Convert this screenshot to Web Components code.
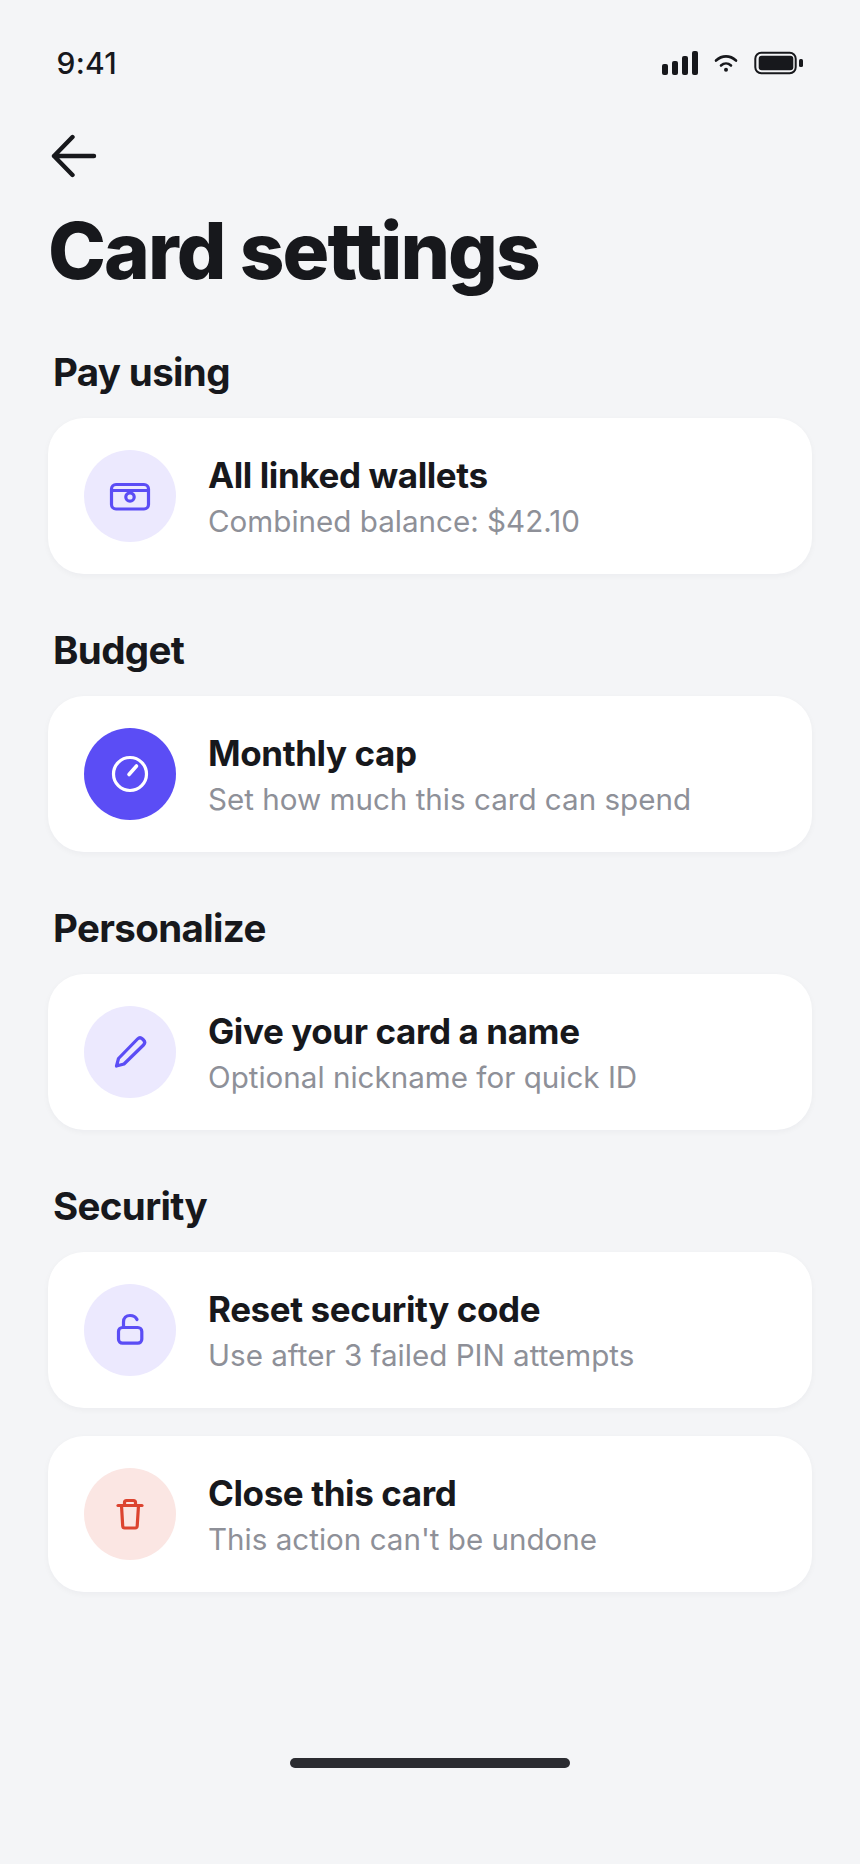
<!DOCTYPE html>
<html lang="en">
<head>
<meta charset="utf-8">
<title>Card settings</title>
<style>
    html, body { margin: 0; background: #f4f5f7; }
    body { font-family: Inter, "Liberation Sans", sans-serif; color: #17181c; }
</style>
</head>
<body>
<settings-screen>
    <status-bar time="9:41"></status-bar>
    <page-header heading="Card settings"></page-header>

    <settings-section label="Pay using">
        <setting-row icon="wallet" title="All linked wallets" sub="Combined balance: $42.10"></setting-row>
    </settings-section>
    <settings-section label="Budget">
        <setting-row icon="gauge" tone="solid" title="Monthly cap" sub="Set how much this card can spend"></setting-row>
    </settings-section>
    <settings-section label="Personalize">
        <setting-row icon="pencil" title="Give your card a name" sub="Optional nickname for quick ID"></setting-row>
    </settings-section>
    <settings-section label="Security">
        <setting-row icon="lock" title="Reset security code" sub="Use after 3 failed PIN attempts"></setting-row>
        <setting-row icon="trash" tone="danger" title="Close this card" sub="This action can't be undone"></setting-row>
    </settings-section>

    <home-bar></home-bar>
</settings-screen>

<script>
const ICONS = {
    wallet: `<rect x="8.500" y="15.500" width="37" height="24.500" rx="4.500"/><path d="M9 21.500h36"/><circle cx="27" cy="28" r="4.200"/>`,
    gauge: `<circle cx="27" cy="27" r="16.500"/><path d="M26 27.500l7.500-8.500" stroke-width="3.600"/>`,
    pencil: `<path d="M13.500 41l2-7.500L34.500 14c1.500-1.500 3.500-1.500 5 0l1 1c1.500 1.500 1.500 3.500 0 5L21 39z"/>`,
    lock: `<rect x="15.500" y="24.500" width="23.300" height="15.700" rx="4"/><path d="M20.500 24v-5c0-4 2.800-6.500 6.500-6.500 3.400 0 5.800 1.500 7 4"/>`,
    trash: `<path d="M15 18.500h24"/><path d="M18.500 18.500l1.200 20.500c.1 1.500 1 2 2 2h10.500c1 0 1.900-.5 2-2l1.300-20.500"/><path d="M21.500 18v-2.500c0-1.500 1-2 2-2h7c1 0 2 .5 2 2v2.500"/>`
};

class SettingsScreen extends HTMLElement {
    constructor() {
        super();
        this.attachShadow({ mode: 'open' });
        this.shadowRoot.innerHTML = `
            <style>
                :host {
                    display: flex;
                    flex-direction: column;
                    box-sizing: border-box;
                    width: 860px;
                    height: 1864px;
                    padding: 0 48px;
                    background: #f4f5f7;
                }
            </style>
            <slot></slot>
        `;
    }
}

class StatusBar extends HTMLElement {
    constructor() {
        super();
        this.attachShadow({ mode: 'open' });
    }

    connectedCallback() {
        this.shadowRoot.innerHTML = `
            <style>
                :host {
                    display: flex;
                    align-items: center;
                    justify-content: space-between;
                    height: 36px;
                    margin-top: 45px;
                    padding: 0 8px 0 8.500px;
                }
                .time { font-size: 30px; font-weight: 500; letter-spacing: .3px; }
                .icons { display: flex; align-items: center; }
                svg { display: block; }
            </style>
            <span class="time">${this.getAttribute('time') || ''}</span>
            <div class="icons">
                <svg width="142" height="28" viewBox="0 0 142 28" fill="#17181c">
                    <rect x="0" y="15" width="6" height="11" rx="2"/>
                    <rect x="10" y="12" width="6" height="14" rx="2"/>
                    <rect x="20" y="7" width="6" height="19" rx="2"/>
                    <rect x="30" y="2" width="6" height="24" rx="2"/>
                    <g fill="none" stroke="#17181c" stroke-width="2.600" stroke-linecap="round">
                        <path d="M54 11.500c6-5.500 14-5.500 20 0"/>
                        <path d="M59 16.500c3-2.700 7-2.700 10 0"/>
                    </g>
                    <circle cx="64" cy="20.700" r="2"/>
                    <rect x="93.300" y="3.700" width="40.400" height="20.600" rx="6" fill="none" stroke="#17181c" stroke-width="2"/>
                    <rect x="96.700" y="6.700" width="34.600" height="14.600" rx="3"/>
                    <rect x="137" y="10" width="4" height="8" rx="1.500"/>
                </svg>
            </div>
        `;
    }
}

class PageHeader extends HTMLElement {
    constructor() {
        super();
        this.attachShadow({ mode: 'open' });
    }

    connectedCallback() {
        this.shadowRoot.innerHTML = `
            <style>
                :host { display: block; }
                svg { display: block; margin-top: 53px; }
                h1 {
                    margin: 29px 0 1px 0;
                    font-size: 78px;
                    line-height: 88px;
                    font-weight: 800;
                    letter-spacing: -1.900px;
                }
            </style>
            <svg width="54" height="44" viewBox="0 0 54 44" fill="none" stroke="#17181c" stroke-width="4.400" stroke-linecap="round" stroke-linejoin="round">
                <path d="M6 22h40M24.500 3L6 22l18.500 19"/>
            </svg>
            <h1>${this.getAttribute('heading') || ''}</h1>
        `;
    }
}

class SettingsSection extends HTMLElement {
    constructor() {
        super();
        this.attachShadow({ mode: 'open' });
    }

    connectedCallback() {
        this.shadowRoot.innerHTML = `
            <style>
                :host { display: block; margin-top: 53px; }
                .label {
                    margin: 0 0 23px 5px;
                    font-size: 38.500px;
                    line-height: 46px;
                    font-weight: 700;
                    letter-spacing: -.65px;
                }
                .rows { display: flex; flex-direction: column; gap: 28px; }
            </style>
            <div class="label">${this.getAttribute('label') || ''}</div>
            <div class="rows"><slot></slot></div>
        `;
    }
}

class SettingRow extends HTMLElement {
    constructor() {
        super();
        this.attachShadow({ mode: 'open' });
    }

    connectedCallback() {
        const icon = ICONS[this.getAttribute('icon')] || '';
        const tone = this.getAttribute('tone') || 'plain';
        this.shadowRoot.innerHTML = `
            <style>
                :host {
                    display: flex;
                    align-items: center;
                    gap: 32px;
                    box-sizing: border-box;
                    height: 156px;
                    padding: 0 36px;
                    background: #fff;
                    border-radius: 36px;
                    box-shadow: 0 2px 6px rgba(20, 24, 40, .04);
                }
                .badge {
                    flex: none;
                    display: flex;
                    align-items: center;
                    justify-content: center;
                    width: 92px;
                    height: 92px;
                    border-radius: 50%;
                }
                .plain { background: #ece9fe; color: #5b4df5; }
                .solid { background: #5b4df5; color: #fff; }
                .danger { background: #fbe6e3; color: #dc4430; }
                svg { display: block; fill: none; stroke: currentColor; stroke-width: 3.200; stroke-linecap: round; stroke-linejoin: round; }
                .text { padding-bottom: 1px; }
                .title { font-size: 35px; line-height: 44px; font-weight: 700; letter-spacing: -.4px; color: #17181c; }
                .sub { margin-top: 6px; font-size: 29.600px; line-height: 36px; color: #8e9098; }
            </style>
            <div class="badge ${tone}">
                <svg width="54" height="54" viewBox="0 0 54 54">${icon}</svg>
            </div>
            <div class="text">
                <div class="title">${this.getAttribute('title') || ''}</div>
                <div class="sub">${this.getAttribute('sub') || ''}</div>
            </div>
        `;
    }
}

class HomeBar extends HTMLElement {
    constructor() {
        super();
        this.attachShadow({ mode: 'open' });
        this.shadowRoot.innerHTML = `
            <style>
                :host { display: flex; justify-content: center; margin-top: auto; padding-bottom: 96px; }
                div { width: 280px; height: 10px; border-radius: 5px; background: #2b2c31; }
            </style>
            <div></div>
        `;
    }
}

customElements.define('settings-screen', SettingsScreen);
customElements.define('status-bar', StatusBar);
customElements.define('page-header', PageHeader);
customElements.define('settings-section', SettingsSection);
customElements.define('setting-row', SettingRow);
customElements.define('home-bar', HomeBar);
</script>
</body>
</html>
